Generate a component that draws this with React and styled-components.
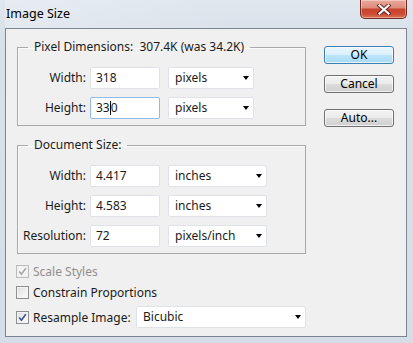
import React from "react";
import styled, { createGlobalStyle } from "styled-components";

const Global = createGlobalStyle`
  html, body { margin: 0; padding: 0; }
  body {
    width: 413px; height: 343px; overflow: hidden;
    font-family: "Noto Sans", "DejaVu Sans", sans-serif;
    font-size: 12px; color: #1b1b1b;
  }
`;

const Window = styled.div`
  width: 413px; height: 343px; box-sizing: border-box;
  display: flex; flex-direction: column;
  padding: 0 6px 6px 5px;
  background: linear-gradient(180deg, #dfe6ee 0%, #d8e0e9 12%, #d5dee8 100%);
`;

const TitleBar = styled.div`
  height: 28px; flex: none;
  display: flex; align-items: flex-start; justify-content: space-between;
  background: linear-gradient(90deg, rgba(255,255,255,0.25), rgba(255,255,255,0) 60%);
`;

const Title = styled.div`
  margin: 6px 0 0 1px;
  font-size: 12.5px; line-height: 16px; color: #000;
`;

const CloseButton = styled.div`
  width: 47px; height: 19px; box-sizing: border-box;
  border: 1px solid #6e2b21; border-top: none;
  border-radius: 0 0 5px 5px;
  background: linear-gradient(180deg, #e9aa9c 0%, #df8c7c 42%, #c9442f 52%, #cc4b33 78%, #dd7656 100%);
  box-shadow: inset 0 0 0 1px rgba(255,255,255,0.35);
  display: flex; align-items: center; justify-content: center;
`;

const Client = styled.div`
  flex: 1; box-sizing: border-box;
  border: 1px solid #7d858f;
  background: #f0f0f0;
  display: flex; align-items: flex-start;
  padding: 11px 0 0 11px;
`;

const LeftCol = styled.div`
  width: 289px; flex: none;
  display: flex; flex-direction: column;
`;

const Group = styled.fieldset`
  margin: 0 0 ${p => p.$mb || 0}px 0;
  padding: 13px 0 6px 0;
  border: 1px solid #a9a9a9;
  box-shadow: inset 1px 1px 0 #fafafa;
  min-inline-size: 0;
`;

const Legend = styled.legend`
  margin-left: 10px; padding: 0 6px;
  line-height: 14px; font-size: 12px; color: #1b1b1b;
  white-space: pre;
`;

const FieldGrid = styled.div`
  display: grid;
  grid-template-columns: 72px 78px auto;
  row-gap: 8px;
  align-items: center;
`;

const Label = styled.div`
  text-align: right; padding-right: 4px;
  line-height: 22px; white-space: nowrap;
`;

const TextBox = styled.div`
  width: 70px; height: 22px; box-sizing: border-box;
  border: 1px solid ${p => (p.$focused ? "#8fbbe6" : "#dfe2e7")};
  border-radius: 2px;
  background: #fff;
  padding-left: 5px;
  line-height: 20px;
  display: flex; align-items: center;
`;

const Caret = styled.span`
  display: inline-block; width: 1px; height: 14px; background: #000;
  margin: 0 0 0 0;
`;

const Select = styled.div`
  width: ${p => p.$w}px; height: 22px; box-sizing: border-box;
  border: 1px solid #dfe2e7; border-radius: 2px;
  background: #fff;
  display: flex; align-items: center; justify-content: space-between;
  padding: 0 4px 0 6px;
  line-height: 20px;
`;

const Arrow = styled.span`
  width: 0; height: 0;
  border-left: 3.5px solid transparent; border-right: 3.5px solid transparent;
  border-top: 4px solid #000;
`;

const CheckRow = styled.div`
  display: flex; align-items: center; gap: 4px;
  margin-top: ${p => p.$mt}px;
  margin-left: -1px;
  height: ${p => p.$h || 16}px;
  color: ${p => (p.$disabled ? "#8f8f8f" : "#1b1b1b")};
  white-space: nowrap;
`;

const Box = styled.span`
  width: 13px; height: 13px; box-sizing: border-box; flex: none;
  border: 1px solid ${p => (p.$disabled ? "#bcbcbc" : "#8e8f8f")};
  background: ${p => (p.$disabled
    ? "#f4f4f4"
    : "linear-gradient(135deg, #dcdcdc 0%, #f2f2f2 60%, #fcfcfc 100%)")};
  box-shadow: inset 0 0 0 1px ${p => (p.$disabled ? "#f0f0f0" : "#f4f4f4")};
  display: flex; align-items: center; justify-content: center;
`;

const ResampleLabel = styled.span`
  width: 99px; flex: none;
`;

const RightCol = styled.div`
  margin-left: 18px; padding-top: 6px;
  display: flex; flex-direction: column;
`;

const Button = styled.div`
  width: 70px; height: 18px; box-sizing: border-box;
  margin-top: ${p => p.$mt || 0}px;
  border: 1px solid ${p => (p.$default ? "#3c7fb1" : "#707070")};
  border-radius: 3px;
  background: ${p => (p.$default
    ? "linear-gradient(180deg, #eaf6fd 0%, #d9f0fc 50%, #bee6fd 50%, #a7d9f5 100%)"
    : "linear-gradient(180deg, #f2f2f2 0%, #ebebeb 50%, #dddddd 50%, #cfcfcf 100%)")};
  box-shadow: inset 0 0 0 1px rgba(255,255,255,0.7);
  display: flex; align-items: center; justify-content: center;
  font-size: 12px; line-height: 16px; color: #000;
`;

function Check({ checked, disabled }) {
  return (
    <Box $disabled={disabled}>
      {checked && (
        <svg width="9" height="9" viewBox="0 0 9 9">
          <path d="M1.2 4.6 L3.4 7.2 L7.8 1.2" fill="none"
            stroke={disabled ? "#a6a6a6" : "#3d5496"} strokeWidth="1.6" />
        </svg>
      )}
    </Box>
  );
}

function Row({ label, value, unit, selW, focused }) {
  return (
    <>
      <Label>{label}</Label>
      <TextBox $focused={focused}>{value}</TextBox>
      <Select $w={selW}><span>{unit}</span><Arrow /></Select>
    </>
  );
}

export default function App() {
  return (
    <>
      <Global />
      <Window>
        <TitleBar>
          <Title>Image Size</Title>
          <CloseButton>
            <svg width="14" height="11" viewBox="0 0 14 11">
              <path d="M2.5 1.5 L11.5 9.5 M11.5 1.5 L2.5 9.5" stroke="#5a2119" strokeWidth="4" strokeLinecap="square" />
              <path d="M2.5 1.5 L11.5 9.5 M11.5 1.5 L2.5 9.5" stroke="#ffffff" strokeWidth="2.2" strokeLinecap="square" />
            </svg>
          </CloseButton>
        </TitleBar>
        <Client>
          <LeftCol>
            <Group $mb={12}>
              <Legend>{"Pixel Dimensions:  307.4K (was 34.2K)"}</Legend>
              <FieldGrid>
                <Row label="Width:" value="318" unit="pixels" selW={86} />
                <Row label="Height:" value={<>33<Caret />0</>} unit="pixels" selW={86} focused />
              </FieldGrid>
            </Group>
            <Group>
              <Legend>Document Size:</Legend>
              <FieldGrid>
                <Row label="Width:" value="4.417" unit="inches" selW={99} />
                <Row label="Height:" value="4.583" unit="inches" selW={99} />
                <Row label="Resolution:" value="72" unit="pixels/inch" selW={99} />
              </FieldGrid>
            </Group>
            <CheckRow $mt={9} $disabled>
              <Check checked disabled />
              <span>Scale Styles</span>
            </CheckRow>
            <CheckRow $mt={5}>
              <Check />
              <span>Constrain Proportions</span>
            </CheckRow>
            <CheckRow $mt={6} $h={22}>
              <Check checked />
              <ResampleLabel>Resample Image:</ResampleLabel>
              <Select $w={171}><span>Bicubic</span><Arrow /></Select>
            </CheckRow>
          </LeftCol>
          <RightCol>
            <Button $default>OK</Button>
            <Button $mt={11}>Cancel</Button>
            <Button $mt={16}>Auto...</Button>
          </RightCol>
        </Client>
      </Window>
    </>
  );
}
